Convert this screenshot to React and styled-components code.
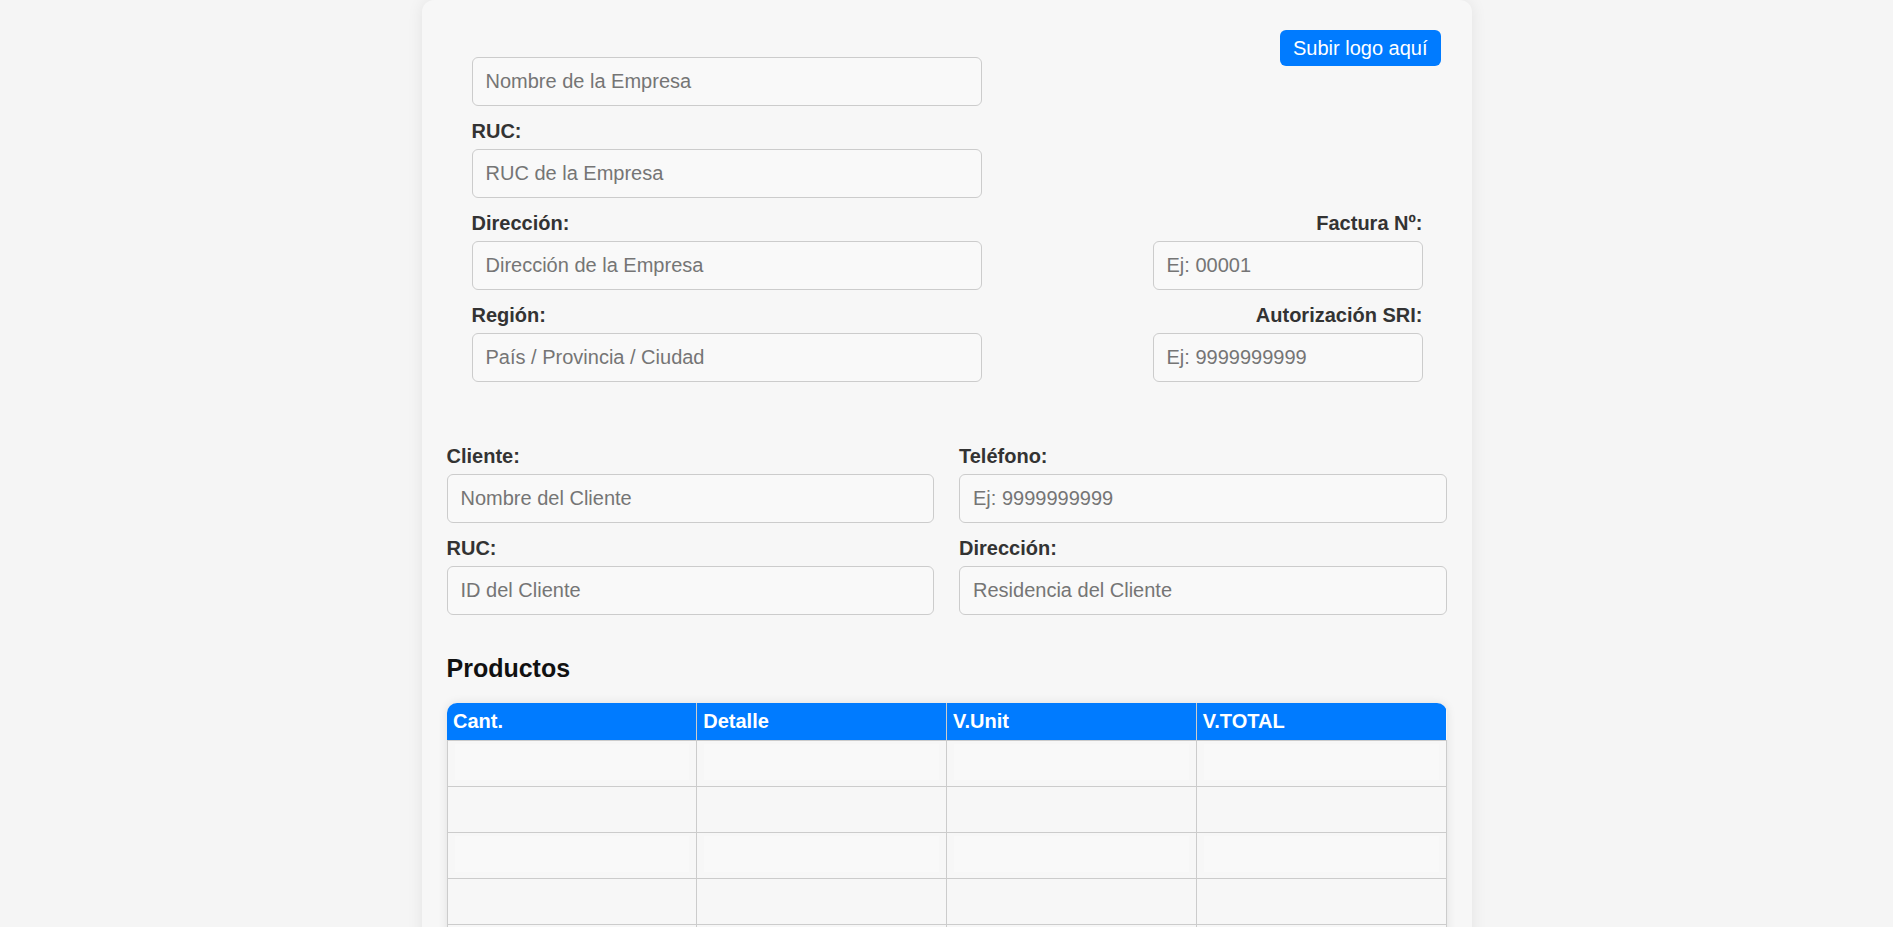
import React from 'react';
import styled, { createGlobalStyle } from 'styled-components';

const GlobalStyle = createGlobalStyle`
  * {
    box-sizing: border-box;
  }
  body {
    margin: 0;
    background-color: #f5f5f5;
    font-family: "Liberation Sans", Arial, sans-serif;
  }
`;

const Card = styled.div`
  width: 1050px;
  margin: 0 auto;
  padding: 25px 25px 40px;
  background-color: #f7f7f7;
  border-radius: 12px;
  box-shadow: 0 0 16px rgba(0, 0, 0, 0.08);
`;

const Header = styled.div`
  display: flex;
  justify-content: space-between;
  margin-bottom: 63px;
`;

const CompanyColumn = styled.div`
  width: 510px;
  margin-left: 25px;
  padding-top: 32px;
  display: flex;
  flex-direction: column;
  gap: 14px;
`;

const InvoiceColumn = styled.div`
  display: flex;
  flex-direction: column;
  justify-content: space-between;
  align-items: flex-end;
`;

const LogoButton = styled.button`
  margin: 5px 6px 0 0;
  height: 36px;
  padding: 0 13px;
  border: none;
  border-radius: 6px;
  background-color: #007bff;
  color: #ffffff;
  font-family: inherit;
  font-size: 20px;
  cursor: pointer;
`;

const InvoiceFields = styled.div`
  width: 270px;
  margin-right: 24px;
  display: flex;
  flex-direction: column;
  gap: 14px;
`;

const Field = styled.div`
  display: flex;
  flex-direction: column;
  text-align: ${(props) => (props.$right ? 'right' : 'left')};
`;

const Label = styled.label`
  display: block;
  height: 23px;
  line-height: 23px;
  margin-bottom: 6px;
  font-size: 20px;
  font-weight: bold;
  color: #333333;
`;

const Input = styled.input`
  width: 100%;
  height: 49px;
  padding: 0 13px;
  border: 1px solid #cccccc;
  border-radius: 6px;
  background-color: #f9f9f9;
  font-family: inherit;
  font-size: 20px;
  color: #333333;
  outline: none;

  &::placeholder {
    color: #757575;
  }
`;

const ClientGrid = styled.div`
  display: grid;
  grid-template-columns: 1fr 1fr;
  column-gap: 25px;
  row-gap: 14px;
`;

const SectionTitle = styled.h3`
  margin: 39px 0 20px;
  height: 29px;
  line-height: 29px;
  font-size: 25px;
  font-weight: bold;
  color: #111111;
`;

const TableWrap = styled.div`
  border-radius: 10px;
  overflow: hidden;
  box-shadow: 0 0 10px rgba(0, 0, 0, 0.1);
`;

const Table = styled.table`
  width: 100%;
  border-collapse: collapse;
  table-layout: fixed;
`;

const Th = styled.th`
  height: 37px;
  padding: 0 6px;
  background-color: #007bff;
  color: #ffffff;
  text-align: left;
  font-size: 20px;
  font-weight: bold;
  border: 1px solid #cccccc;
  border-top: none;

  &:first-child {
    border-left: none;
  }
  &:last-child {
    border-right: none;
  }
`;

const Td = styled.td`
  height: 46px;
  padding: 3px 7px 6px;
  border: 1px solid #cccccc;
  background-color: #f7f7f7;
`;

const CellInput = styled.input`
  width: 100%;
  height: 36px;
  border: none;
  outline: none;
  background-color: ${(props) => (props.$shade ? '#f9f9f9' : 'transparent')};
  font-family: inherit;
  font-size: 18px;
`;

const columns = ['Cant.', 'Detalle', 'V.Unit', 'V.TOTAL'];
const rows = [0, 1, 2, 3, 4, 5];

const App = () => {
  return (
    <>
      <GlobalStyle />
      <Card>
        <Header>
          <CompanyColumn>
            <Field>
              <Input placeholder="Nombre de la Empresa" />
            </Field>
            <Field>
              <Label>RUC:</Label>
              <Input placeholder="RUC de la Empresa" />
            </Field>
            <Field>
              <Label>Dirección:</Label>
              <Input placeholder="Dirección de la Empresa" />
            </Field>
            <Field>
              <Label>Región:</Label>
              <Input placeholder="País / Provincia / Ciudad" />
            </Field>
          </CompanyColumn>
          <InvoiceColumn>
            <LogoButton>Subir logo aquí</LogoButton>
            <InvoiceFields>
              <Field $right>
                <Label>Factura Nº:</Label>
                <Input placeholder="Ej: 00001" />
              </Field>
              <Field $right>
                <Label>Autorización SRI:</Label>
                <Input placeholder="Ej: 9999999999" />
              </Field>
            </InvoiceFields>
          </InvoiceColumn>
        </Header>

        <ClientGrid>
          <Field>
            <Label>Cliente:</Label>
            <Input placeholder="Nombre del Cliente" />
          </Field>
          <Field>
            <Label>Teléfono:</Label>
            <Input placeholder="Ej: 9999999999" />
          </Field>
          <Field>
            <Label>RUC:</Label>
            <Input placeholder="ID del Cliente" />
          </Field>
          <Field>
            <Label>Dirección:</Label>
            <Input placeholder="Residencia del Cliente" />
          </Field>
        </ClientGrid>

        <SectionTitle>Productos</SectionTitle>
        <TableWrap>
          <Table>
            <thead>
              <tr>
                {columns.map((c) => (
                  <Th key={c}>{c}</Th>
                ))}
              </tr>
            </thead>
            <tbody>
              {rows.map((r) => (
                <tr key={r}>
                  {columns.map((c) => (
                    <Td key={c}>
                      <CellInput $shade={r % 2 === 0} />
                    </Td>
                  ))}
                </tr>
              ))}
            </tbody>
          </Table>
        </TableWrap>
      </Card>
    </>
  );
};

export default App;
